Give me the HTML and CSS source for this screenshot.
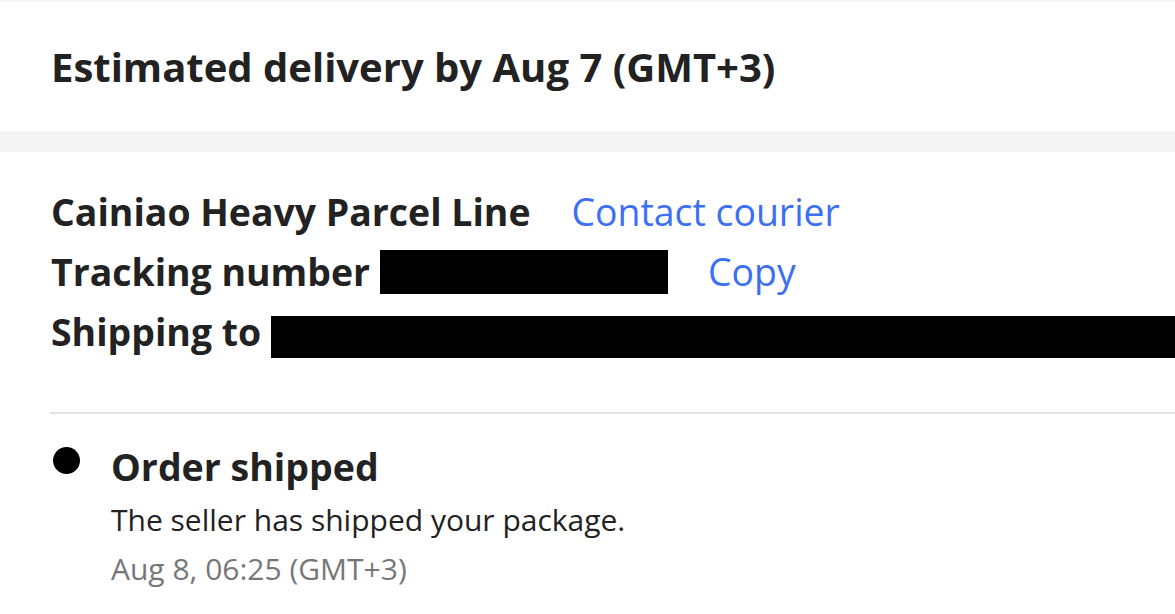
FILE: index.html
```html
<!DOCTYPE html>
<html lang="en">

<head>
    <meta charset="UTF-8">
    <meta name="viewport" content="width=device-width, initial-scale=1.0">
    <title>Tracking</title>
    <link rel="stylesheet" href="styles.css">
</head>

<body>
    <section class="eta">
        <h1>Estimated delivery by Aug 7 (GMT+3)</h1>
    </section>
    <div class="gap"></div>
    <section class="info">
        <div class="row">
            <span class="label">Cainiao Heavy Parcel Line</span>
            <a class="link courier" href="#">Contact courier</a>
        </div>
        <div class="row">
            <span class="label">Tracking number</span>
            <span class="mask mask-number"></span>
            <a class="link copy" href="#">Copy</a>
        </div>
        <div class="row">
            <span class="label">Shipping to</span>
            <span class="mask mask-address"></span>
        </div>
    </section>
    <section class="steps">
        <div class="step">
            <span class="dot"></span>
            <div class="step-text">
                <h2>Order shipped</h2>
                <p class="desc">The seller has shipped your package.</p>
                <p class="date">Aug 8, 06:25 (GMT+3)</p>
            </div>
        </div>
    </section>
</body>

</html>
```

FILE: styles.css
```css
* {
    box-sizing: border-box;
}

body {
    margin: 0;
    font-family: "Open Sans", "Liberation Sans", sans-serif;
    color: #222;
    background-color: #fff;
    overflow: hidden;
}

.eta {
    border-top: 2px solid #f4f4f4;
    height: 131px;
    padding-left: 51px;
    display: flex;
    align-items: center;
}

h1 {
    margin: 0;
    font-size: 40px;
    font-weight: 700;
}

.gap {
    height: 21px;
    background-color: #f4f4f4;
}

.info {
    margin-left: 50px;
    padding: 29px 0 0 1px;
    height: 262px;
    border-bottom: 2px solid #e3e3e3;
}

.row {
    display: flex;
    align-items: center;
    height: 60px;
    font-size: 37.4px;
    white-space: nowrap;
}

.label {
    font-weight: 700;
}

.link {
    color: #3b6ff4;
    text-decoration: none;
}

.courier {
    margin-left: 41px;
}

.mask {
    display: inline-block;
    background-color: #000;
    margin-left: 10px;
}

.mask-number {
    width: 288px;
    height: 44px;
    margin-top: 2px;
}

.copy {
    margin-left: 40px;
}

.mask-address {
    flex: 1;
    height: 42px;
    margin-top: 12px;
}

.steps {
    padding: 28px 0 0 53px;
}

.step {
    display: flex;
    gap: 31px;
}

.dot {
    width: 27px;
    height: 27px;
    border-radius: 50%;
    background-color: #000;
    margin-top: 5px;
    flex-shrink: 0;
}

h2 {
    margin: 0 0 3px;
    font-size: 37.5px;
    font-weight: 700;
    line-height: 50px;
}

.desc,
.date {
    margin: 0;
    font-size: 30px;
    line-height: 49px;
}

.date {
    color: #777;
}
```
